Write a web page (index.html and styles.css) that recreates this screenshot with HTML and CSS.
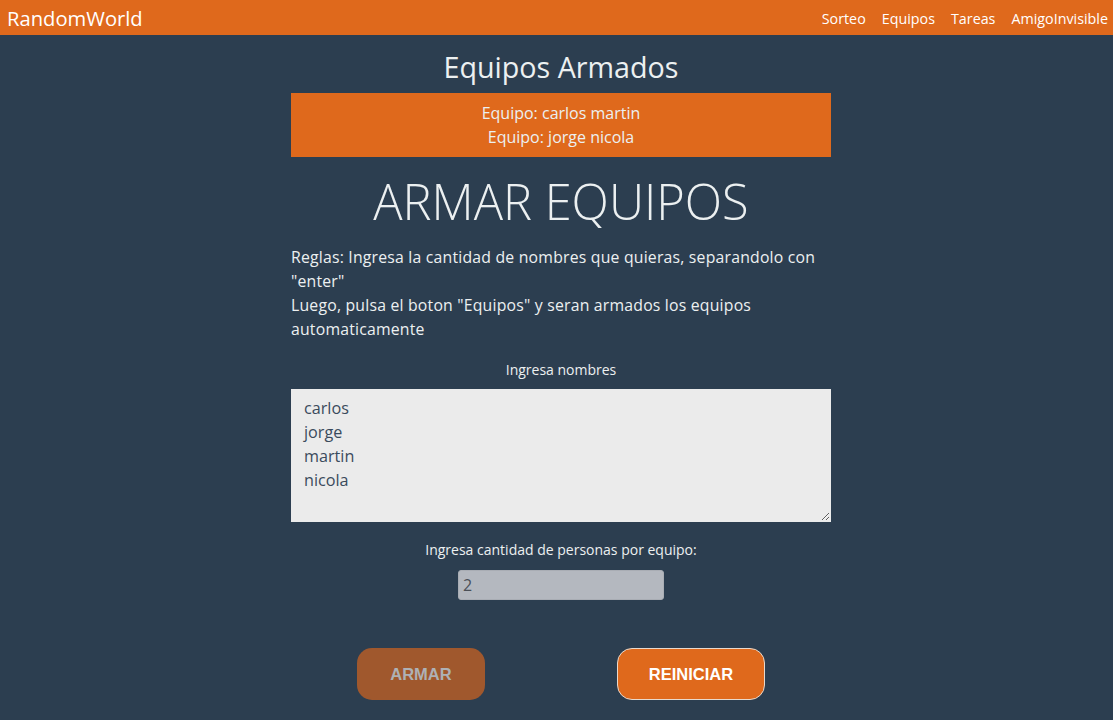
FILE: index.html
```html
<!DOCTYPE html>
<html lang="es">
<head>
<meta charset="utf-8">
<title>RandomWorld</title>
<link rel="stylesheet" href="styles.css">
</head>
<body>
<nav class="navbar">
  <a class="brand" href="#">RandomWorld</a>
  <ul class="nav-links">
    <li><a href="#">Sorteo</a></li>
    <li><a href="#">Equipos</a></li>
    <li><a href="#">Tareas</a></li>
    <li><a href="#">AmigoInvisible</a></li>
  </ul>
</nav>
<main class="page">
  <div class="container">
    <h2 class="result-title">Equipos Armados</h2>
    <div class="result-box">
      <p>Equipo: carlos martin</p>
      <p>Equipo: jorge nicola</p>
    </div>
    <h1 class="main-title">ARMAR EQUIPOS</h1>
    <p class="rules">Reglas: Ingresa la cantidad de nombres que quieras, separandolo con "enter"<br>Luego, pulsa el boton "Equipos" y seran armados los equipos automaticamente</p>
    <label class="field-label" for="names">Ingresa nombres</label>
    <textarea id="names" class="names">carlos
jorge
martin
nicola</textarea>
    <label class="field-label second" for="count">Ingresa cantidad de personas por equipo:</label>
    <input id="count" class="count" type="text" value="2">
    <div class="actions">
      <button class="btn btn-armar">ARMAR</button>
      <button class="btn btn-reset">REINICIAR</button>
    </div>
  </div>
</main>
</body>
</html>
```
FILE: styles.css
```css
* { box-sizing: border-box; }
html, body { margin: 0; padding: 0; }
body {
  background: #2c3e50;
  color: #ecf0f1;
  font-family: "Open Sans", "Noto Sans", sans-serif;
  height: 720px;
  overflow: hidden;
}
.navbar {
  height: 35px;
  background: #df691c;
  display: flex;
  justify-content: space-between;
  align-items: center;
  padding: 0 5px 0 7px;
}
.brand {
  color: #fff;
  text-decoration: none;
  font-size: 20.2px;
}
.nav-links {
  list-style: none;
  margin: 0;
  padding: 0;
  display: flex;
  gap: 16px;
}
.nav-links a {
  color: #fff;
  text-decoration: none;
  font-size: 14.3px;
}
.page {
  padding-left: 9px;
}
.container {
  width: 540px;
  margin: 0 auto;
  display: flex;
  flex-direction: column;
  align-items: center;
}
.result-title {
  margin: 15px 0 9px;
  font-size: 28.7px;
  font-weight: 400;
  line-height: 34px;
  height: 34px;
}
.result-box {
  width: 100%;
  background: #df691c;
  padding: 8px 0;
  text-align: center;
}
.result-box p {
  margin: 0;
  font-size: 16px;
  line-height: 24px;
}
.main-title {
  margin: 13px 0 0;
  font-family: "Open Sans", sans-serif;
  font-weight: 300;
  font-size: 48.8px;
  line-height: 62px;
  height: 62px;
}
.rules {
  align-self: stretch;
  margin: 13px 0 0;
  font-size: 15.8px;
  letter-spacing: 0.2px;
  line-height: 24px;
}
.field-label {
  margin-top: 19px;
  font-size: 14px;
  line-height: 20px;
}
.field-label.second {
  margin-top: 18px;
}
.names {
  display: block;
  margin-top: 9px;
  width: 540px;
  height: 133px;
  background: #ebebeb;
  color: #3a4a5c;
  border: 1px solid #ebebeb;
  padding: 6px 12px;
  font-family: "Open Sans", sans-serif;
  font-size: 16.2px;
  line-height: 24px;
  resize: vertical;
}
.count {
  margin-top: 10px;
  width: 206px;
  height: 30px;
  background: #b4b8bf;
  border: 1px solid #a9adb4;
  border-radius: 3px;
  padding: 0 4px;
  color: #4a4f57;
  font-family: "Open Sans", sans-serif;
  font-size: 16px;
}
.actions {
  margin-top: 48px;
  width: 100%;
  display: flex;
  justify-content: space-around;
}
.btn {
  height: 52px;
  border-radius: 15px;
  font-family: "Liberation Sans", Arial, sans-serif;
  font-weight: 700;
  font-size: 16.5px;
  cursor: pointer;
}
.btn-armar {
  width: 128px;
  background: #a0582d;
  color: #aeb1b5;
  border: none;
}
.btn-reset {
  width: 148px;
  background: #df691c;
  color: #fff;
  border: 1px solid #e8d9cc;
}
```
